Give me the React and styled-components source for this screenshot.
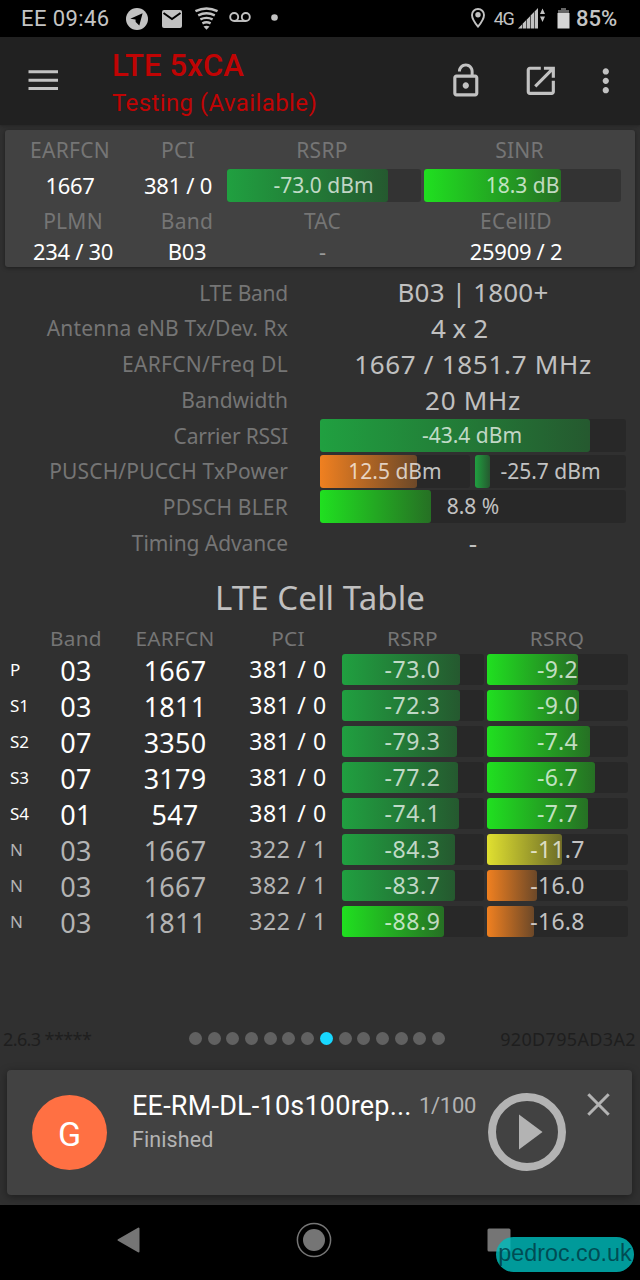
import React from "react";
import styled, { createGlobalStyle } from "styled-components";

const GlobalStyle = createGlobalStyle`
  * { box-sizing: border-box; }
  html, body { margin: 0; background: #000; }
  svg { display: block; flex: none; }
`;

const UI = `Roboto, "Liberation Sans", sans-serif`;
const DATA = `"Noto Sans", "Open Sans", sans-serif`;

const Screen = styled.div`
  width: 640px;
  height: 1280px;
  display: flex;
  flex-direction: column;
  overflow: hidden;
  background: #303030;
  color: #c0c0c0;
  font-family: ${DATA};
`;

/* ---------- status bar ---------- */

const StatusBar = styled.div`
  flex: none;
  height: 37px;
  padding: 0 23px 0 21px;
  display: flex;
  align-items: center;
  justify-content: space-between;
  background: #000;
  color: #c4c4c4;
  font-family: ${UI};
`;

const StatusGroup = styled.div`
  display: flex;
  align-items: center;
  height: 37px;
`;

const StatusText = styled.span`
  font-size: ${(p) => p.$size || 22}px;
  font-weight: ${(p) => p.$weight || 400};
  line-height: 37px;
  letter-spacing: ${(p) => p.$track || 0}px;
  margin-left: ${(p) => p.$gap || 0}px;
  white-space: pre;
`;

const StatusIcon = styled.svg`
  margin-left: ${(p) => p.$gap || 0}px;
`;

/* ---------- app bar ---------- */

const AppBar = styled.header`
  flex: none;
  height: 88px;
  padding: 0 15px 0 28px;
  display: flex;
  align-items: flex-start;
  background: #212121;
  box-shadow: 0 1px 3px rgba(0, 0, 0, 0.25);
  font-family: ${UI};
`;

const Titles = styled.div`
  flex: 1;
  margin-left: 53px;
  padding-top: 8px;
  color: #c00404;
  white-space: nowrap;
`;

const Title = styled.h1`
  margin: 0;
  font-size: 31px;
  font-weight: 500;
  line-height: 41px;
  letter-spacing: 0.1px;
`;

const Subtitle = styled.div`
  font-size: 24px;
  line-height: 34px;
  letter-spacing: 0.4px;
`;

const BarIcon = styled.svg`
  margin-top: ${(p) => p.$top}px;
  margin-left: ${(p) => p.$gap || 0}px;
`;

/* ---------- shared ---------- */

const TONES = {
  green: ["#20a040", "#25592f"],
  bright: ["#20e020", "#267024"],
  yellow: ["#e0e030", "#6c6c28"],
  orange: ["#f08020", "#6c4828"],
};

const Track = styled.div`
  position: relative;
  display: flex;
  align-items: center;
  justify-content: center;
  height: ${(p) => p.$height}px;
  padding-right: ${(p) => p.$shift || 0}px;
  border-radius: 3px;
  background: ${(p) => (p.$raised ? "#333333" : "#282828")};
  color: #c6c6c6;
  font-size: ${(p) => p.$size}px;
  letter-spacing: ${(p) => p.$tracking || 0}px;
  line-height: 1;
  white-space: nowrap;
`;

const Fill = styled.div`
  position: absolute;
  inset: 0 auto 0 0;
  border-radius: 3px;
  background: linear-gradient(
    to right,
    ${(p) => TONES[p.$tone][0]},
    ${(p) => TONES[p.$tone][1]}
  );
`;

const FillText = styled.span`
  position: relative;
  color: rgba(255, 255, 255, 0.73);
`;

function Meter({ tone, fill, text, height, size, raised, shift, tracking }) {
  return (
    <Track $height={height} $size={size} $raised={raised} $shift={shift} $tracking={tracking}>
      <Fill $tone={tone} style={{ width: fill }} />
      <FillText>{text}</FillText>
    </Track>
  );
}

/* ---------- summary card ---------- */

const Card = styled.section`
  flex: none;
  height: 137px;
  margin: 5px 5px 0;
  border-radius: 3px;
  background: #424242;
  box-shadow: 0 1px 4px rgba(0, 0, 0, 0.4);
  font-size: 21px;
`;

const CardRow = styled.div`
  display: grid;
  grid-template-columns: ${(p) => p.$cols};
  height: ${(p) => p.$height}px;
  align-items: center;
  text-align: center;
  line-height: 1;
  white-space: nowrap;
`;

const Label = styled.span`
  color: #757575;
  letter-spacing: 0.25px;
  padding-top: ${(p) => p.$drop || 0}px;
  padding-right: ${(p) => p.$shift || 0}px;
`;

const Value = styled.span`
  color: ${(p) => (p.$dim ? "#9a9a9a" : "#fff")};
  font-size: 22px;
  letter-spacing: -0.3px;
`;

const TOP_COLS = "130px 86px 206px 197px";
const BAR_COLS = "130px 86px 6px 194px 3px 197px";
const BOTTOM_COLS = "136px 92px 179px 208px";

/* ---------- details ---------- */

const Details = styled.section`
  flex: none;
  padding: 7.4px 14px 0 0;
`;

const DetailRow = styled.div`
  display: grid;
  grid-template-columns: 288px 306px;
  column-gap: 32px;
  height: 35.75px;
  align-items: center;
  line-height: 1;
  white-space: nowrap;
`;

const DetailLabel = styled.span`
  padding-top: 1.5px;
  text-align: right;
  color: #757575;
  font-size: 21px;
  letter-spacing: ${(p) => p.$track || 0}px;
`;

const DetailValue = styled.span`
  text-align: center;
  font-size: ${(p) => p.$size || 26}px;
  letter-spacing: ${(p) => p.$track || 0}px;
  padding-right: ${(p) => p.$shift || 0}px;
`;

const Split = styled.div`
  display: grid;
  grid-template-columns: 150px 151px;
  gap: 5px;
`;

/* ---------- cell table ---------- */

const TableTitle = styled.h2`
  flex: none;
  margin: 18px 0 0;
  height: 44px;
  font-size: 33px;
  font-weight: 400;
  line-height: 39px;
  letter-spacing: 0.1px;
  text-align: center;
`;

const Grid = styled.div`
  display: grid;
  grid-template-columns: 30px 72px 126px 100px 142px 141px;
  column-gap: 0;
  padding-left: 10px;
  align-items: center;
  text-align: center;
  line-height: 1;
  white-space: nowrap;
`;

const TableHead = styled(Grid)`
  flex: none;
  height: 31.6px;
  font-size: 20.8px;
  & > :nth-child(5) { margin-left: 7px; }
  & > :nth-child(6) { margin-left: 13px; }
`;

const TableBody = styled.div`
  flex: none;
  display: flex;
  flex-direction: column;
  gap: 4.7px;
  & > div > :nth-child(5) { margin: 0 -4px 0 4px; }
  & > div > :nth-child(6) { margin: 0 -7px 0 7px; }
`;

const CellRow = styled(Grid)`
  height: 31.3px;
  color: ${(p) => (p.$dim ? "#b4b4b4" : "#fff")};
`;

const Kind = styled.span`
  text-align: left;
  font-size: 17px;
`;

const Big = styled.span`
  padding-top: 1.5px;
  font-size: 27px;
  letter-spacing: 0.2px;
`;

const Pci = styled.span`
  font-size: 23px;
  letter-spacing: 0.6px;
`;

const CELLS = [
  ["P", "03", "1667", "381 / 0", "green", "-73.0", 117.5, "bright", "-9.2", 91],
  ["S1", "03", "1811", "381 / 0", "green", "-72.3", 117.5, "bright", "-9.0", 92],
  ["S2", "07", "3350", "381 / 0", "green", "-79.3", 115, "bright", "-7.4", 102.5],
  ["S3", "07", "3179", "381 / 0", "green", "-77.2", 116, "bright", "-6.7", 108],
  ["S4", "01", "547", "381 / 0", "green", "-74.1", 117, "bright", "-7.7", 101],
  ["N", "03", "1667", "322 / 1", "green", "-84.3", 113, "yellow", "-11.7", 75],
  ["N", "03", "1667", "382 / 1", "green", "-83.7", 113, "orange", "-16.0", 50],
  ["N", "03", "1811", "322 / 1", "bright", "-88.9", 102, "orange", "-16.8", 46.5],
];

/* ---------- footer ---------- */

const Pager = styled.div`
  flex: none;
  margin-top: auto;
  height: 32px;
  padding: 0 4px 0 3px;
  display: grid;
  grid-template-columns: 186px 256px 1fr;
  align-items: center;
  color: #1e1e1e;
  font-size: 18px;
  line-height: 32px;
  white-space: nowrap;
`;

const Build = styled.span`
  letter-spacing: ${(p) => p.$track || 0}px;
  text-align: ${(p) => p.$align || "left"};
`;

const Dots = styled.div`
  display: flex;
  justify-content: space-between;
`;

const Dot = styled.i`
  width: 13px;
  height: 13px;
  border-radius: 50%;
  background: ${(p) => (p.$active ? "#18d8ff" : "#616161")};
`;

const Toast = styled.section`
  flex: none;
  height: 124.5px;
  margin: 15.5px 8px 10.5px 7px;
  display: flex;
  border-radius: 4px;
  background: #424242;
  box-shadow: 0 2px 8px rgba(0, 0, 0, 0.4);
  font-family: ${UI};
`;

const Avatar = styled.div`
  flex: none;
  width: 75px;
  height: 75px;
  margin: 24.5px 0 0 25px;
  border-radius: 50%;
  background: #ff7043;
  color: #fff;
  font-size: 34px;
  line-height: 78px;
  text-align: center;
`;

const ToastText = styled.div`
  flex: none;
  width: 287px;
  margin: 17px 0 0 25px;
  white-space: nowrap;
`;

const ToastTitle = styled.div`
  color: #fff;
  font-size: 27px;
  line-height: 38px;
  letter-spacing: 0.22px;
`;

const ToastState = styled.div`
  color: #b3b3b3;
  font-size: 21.5px;
  line-height: 29px;
  letter-spacing: 0.1px;
`;

const Counter = styled.div`
  flex: none;
  width: 68.5px;
  margin-top: 17px;
  color: #b3b3b3;
  font-size: 22px;
  line-height: 37px;
  letter-spacing: -0.3px;
`;

const ToastIcon = styled.svg`
  margin-top: ${(p) => p.$top}px;
  margin-left: ${(p) => p.$gap || 0}px;
`;

const NavBar = styled.nav`
  position: relative;
  flex: none;
  height: 75px;
  padding: 0 129px 5px 117px;
  display: flex;
  align-items: center;
  justify-content: space-between;
  background: #000;
`;

const Watermark = styled.div`
  position: absolute;
  right: 6px;
  bottom: 8px;
  width: 138px;
  height: 35px;
  border-radius: 18px;
  background: rgba(0, 188, 188, 0.82);
  color: rgba(0, 50, 60, 0.75);
  font-family: "Liberation Sans", Arial, sans-serif;
  font-size: 23.3px;
  line-height: 32px;
  text-align: center;
  white-space: nowrap;
`;

const ink = "#c2c2c2";

export default function App() {
  return (
    <>
      <GlobalStyle />
      <Screen>
        <StatusBar>
          <StatusGroup>
            <StatusText $track={0.4}>EE 09:46</StatusText>
            <StatusIcon $gap={17} width="22" height="22" viewBox="0 0 22 22">
              <circle cx="11" cy="11" r="11" fill={ink} />
              <path d="M4.3 10.8 16.6 5.3 13.3 17.4 9.7 14.1 9.5 11.5z" fill="#000" />
            </StatusIcon>
            <StatusIcon $gap={13.5} width="20" height="18" viewBox="0 0 20 18">
              <rect width="20" height="18" rx="2" fill={ink} />
              <path d="M1.5 3 10 9 18.5 3" fill="none" stroke="#000" strokeWidth="2" />
            </StatusIcon>
            <StatusIcon $gap={13} width="23" height="23" viewBox="0 0 23 23">
              <g fill="none" stroke={ink} strokeWidth="2.4">
                <path d="M0.5 4.2Q11.5-1.2 22.5 4.2" />
                <path d="M3.2 8.4Q11.5 4.2 19.8 8.4" />
                <path d="M5.4 12.4Q11.5 9.4 17.6 12.4" />
                <path d="M7.4 16.4Q11.5 14.2 15.6 16.4" />
              </g>
              <path d="M8.5 19.6Q11.5 18 14.500 19.6L11.5 22.8z" fill={ink} />
            </StatusIcon>
            <StatusIcon $gap={11} width="22" height="13" viewBox="0 0 22 13">
              <g fill="none" stroke={ink} strokeWidth="1.9">
                <circle cx="5.2" cy="5" r="4" />
                <circle cx="16.8" cy="5" r="4" />
                <path d="M5.2 9H16.8" />
              </g>
            </StatusIcon>
            <StatusIcon $gap={20} width="7" height="9" viewBox="0 0 7 9">
              <circle cx="3.5" cy="3.5" r="3.3" fill={ink} />
            </StatusIcon>
          </StatusGroup>
          <StatusGroup>
            <StatusIcon width="14" height="22" viewBox="0 0 14 22">
              <path d="M7 1C3.6 1 1 3.6 1 6.9 1 11.2 7 18.6 7 18.6S13 11.2 13 6.9C13 3.6 10.4 1 7 1z" fill="none" stroke={ink} strokeWidth="1.9" />
              <circle cx="7" cy="6.8" r="2.7" fill={ink} />
            </StatusIcon>
            <StatusText $gap={9} $size={18} $track={-1.3}>4G</StatusText>
            <StatusIcon $gap={4} width="28" height="22" viewBox="0 0 28 22">
              <g fill={ink}>
                <path d="M0 20.5 4 16.5V20.5zM4.600 15.8 8 12.3V20.5H4.600zM8.600 11.8 12 8.2V20.500H8.600zM12.600 7.600 16 4.1V20.500H12.600zM16.600 3.500 20 0V20.500H16.600z" />
                <path d="M24.5 0.5 27 6H22zM24.5 14 27 8.5H22z" />
              </g>
            </StatusIcon>
            <StatusIcon $gap={11} width="13" height="22" viewBox="0 0 13 22">
              <path d="M4 0h5v2h3v3H1V2h3z" fill="#666" />
              <path d="M0.5 5H12.5V20.5H0.5z" fill="#d6d6d6" />
            </StatusIcon>
            <StatusText $gap={6.5} $weight={500} $track={-0.1}>85%</StatusText>
          </StatusGroup>
        </StatusBar>

        <AppBar>
          <BarIcon $top={33} width="31" height="20" viewBox="0 0 31 20">
            <path d="M0.5 1.8H30M0.5 10.2H30M0.5 18.4H30" stroke={ink} strokeWidth="3" />
          </BarIcon>
          <Titles>
            <Title>LTE 5xCA</Title>
            <Subtitle>Testing (Available)</Subtitle>
          </Titles>
          <BarIcon $top={24.5} width="37.6" height="37.6" viewBox="0 0 24 24">
            <path fill={ink} d="M12 17c1.1 0 2-.9 2-2s-.9-2-2-2-2 .9-2 2 .9 2 2 2zm6-9h-1V6c0-2.76-2.24-5-5-5S7 3.24 7 6h1.9c0-1.71 1.39-3.1 3.1-3.1 1.71 0 3.1 1.39 3.1 3.1v2H6c-1.1 0-2 .9-2 2v10c0 1.1.9 2 2 2h12c1.1 0 2-.9 2-2V10c0-1.1-.9-2-2-2zm0 12H6V10h12v10z" />
          </BarIcon>
          <BarIcon $gap={37} $top={25} width="37.6" height="37.6" viewBox="0 0 24 24">
            <path fill={ink} d="M19 19H5V5h7V3H5c-1.11 0-2 .9-2 2v14c0 1.1.89 2 2 2h14c1.1 0 2-.9 2-2v-7h-2v7zM14 3v2h3.59l-9.83 9.83 1.41 1.41L19 6.41V10h2V3h-7z" />
          </BarIcon>
          <BarIcon $gap={28} $top={25} width="37.6" height="37.6" viewBox="0 0 24 24">
            <path fill={ink} d="M12 8c1.1 0 2-.9 2-2s-.9-2-2-2-2 .9-2 2 .9 2 2 2zm0 2c-1.1 0-2 .9-2 2s.9 2 2 2 2-.9 2-2-.9-2-2-2zm0 6c-1.1 0-2 .9-2 2s.9 2 2 2 2-.9 2-2-.9-2-2-2z" />
          </BarIcon>
        </AppBar>

        <Card>
          <CardRow $cols={TOP_COLS} $height={38.5}>
            <Label $drop={1.5}>EARFCN</Label>
            <Label $drop={1.5}>PCI</Label>
            <Label $drop={1.5} $shift={4}>RSRP</Label>
            <Label $drop={1.5} $shift={12}>SINR</Label>
          </CardRow>
          <CardRow $cols={BAR_COLS} $height={33.5}>
            <Value>1667</Value>
            <Value>381 / 0</Value>
            <span />
            <Meter raised tone="green" fill={161} text="-73.0 dBm" height={33} size={21} shift={1} />
            <span />
            <Meter raised tone="bright" fill={137} text="18.3 dB" height={33} size={21} />
          </CardRow>
          <CardRow $cols={BOTTOM_COLS} $height={38}>
            <Label $drop={1}>PLMN</Label>
            <Label $drop={1}>Band</Label>
            <Label $drop={1}>TAC</Label>
            <Label $drop={1}>ECellID</Label>
          </CardRow>
          <CardRow $cols={BOTTOM_COLS} $height={21}>
            <Value>234 / 30</Value>
            <Value>B03</Value>
            <Value $dim>-</Value>
            <Value>25909 / 2</Value>
          </CardRow>
        </Card>

        <Details>
          <DetailRow>
            <DetailLabel $track={-0.25}>LTE Band</DetailLabel>
            <DetailValue $track={0.2}>B03 | 1800+</DetailValue>
          </DetailRow>
          <DetailRow>
            <DetailLabel $track={0.15}>Antenna eNB Tx/Dev. Rx</DetailLabel>
            <DetailValue $shift={27}>4 x 2</DetailValue>
          </DetailRow>
          <DetailRow>
            <DetailLabel $track={0.3}>EARFCN/Freq DL</DetailLabel>
            <DetailValue $track={0.7}>1667 / 1851.7 MHz</DetailValue>
          </DetailRow>
          <DetailRow>
            <DetailLabel>Bandwidth</DetailLabel>
            <DetailValue $track={0.7}>20 MHz</DetailValue>
          </DetailRow>
          <DetailRow>
            <DetailLabel $track={-0.22}>Carrier RSSI</DetailLabel>
            <Meter tone="green" fill={270} text="-43.4 dBm" height={33} size={21} shift={2} />
          </DetailRow>
          <DetailRow>
            <DetailLabel $track={0.16}>PUSCH/PUCCH TxPower</DetailLabel>
            <Split>
              <Meter tone="orange" fill={97} text="12.5 dBm" height={33} size={21} />
              <Meter tone="green" fill={15} text="-25.7 dBm" height={33} size={21} />
            </Split>
          </DetailRow>
          <DetailRow>
            <DetailLabel $track={0.2}>PDSCH BLER</DetailLabel>
            <Meter tone="bright" fill={111} text="8.8 %" height={33} size={21} />
          </DetailRow>
          <DetailRow>
            <DetailLabel $track={-0.07}>Timing Advance</DetailLabel>
            <DetailValue>-</DetailValue>
          </DetailRow>
        </Details>

        <TableTitle>LTE Cell Table</TableTitle>
        <TableHead>
          <span />
          <Label>Band</Label>
          <Label>EARFCN</Label>
          <Label>PCI</Label>
          <Label>RSRP</Label>
          <Label>RSRQ</Label>
        </TableHead>
        <TableBody>
          {CELLS.map(([kind, band, earfcn, pci, t1, rsrp, w1, t2, rsrq, w2], i) => (
            <CellRow key={i} $dim={kind === "N"}>
              <Kind>{kind}</Kind>
              <Big>{band}</Big>
              <Big>{earfcn}</Big>
              <Pci>{pci}</Pci>
              <Meter tone={t1} fill={w1} text={rsrp} height={31.3} size={23} shift={1} tracking={0.6} />
              <Meter tone={t2} fill={w2} text={rsrq} height={31.3} size={23} tracking={0.3} />
            </CellRow>
          ))}
        </TableBody>

        <Pager>
          <Build $track={-0.6}>2.6.3 *****</Build>
          <Dots>
            {Array.from({ length: 14 }, (_, i) => (
              <Dot key={i} $active={i === 7} />
            ))}
          </Dots>
          <Build $align="right" $track={0.35}>920D795AD3A2</Build>
        </Pager>

        <Toast>
          <Avatar>G</Avatar>
          <ToastText>
            <ToastTitle>EE-RM-DL-10s100rep...</ToastTitle>
            <ToastState>Finished</ToastState>
          </ToastText>
          <Counter>1/100</Counter>
          <ToastIcon $top={22.5} width="78" height="78" viewBox="0 0 78 78">
            <circle cx="39" cy="39" r="35" fill="none" stroke="#b3b3b3" strokeWidth="8" />
            <path d="M31 21.5V56.5L54.5 39z" fill="#b3b3b3" />
          </ToastIcon>
          <ToastIcon $top={22.5} $gap={21} width="23" height="23" viewBox="0 0 23 23">
            <path d="M1.3 1.3 21.7 21.7M21.7 1.3 1.3 21.7" stroke="#b3b3b3" strokeWidth="3" />
          </ToastIcon>
        </Toast>

        <NavBar>
          <svg width="23" height="26" viewBox="0 0 23 26">
            <path d="M1.5 13 21.5 1.5V24.5z" fill="#757575" stroke="#757575" strokeWidth="2" strokeLinejoin="round" />
          </svg>
          <svg width="36" height="36" viewBox="0 0 36 36">
            <circle cx="18" cy="18" r="16.6" fill="none" stroke="#757575" strokeWidth="1.5" />
            <circle cx="18" cy="18" r="11" fill="#757575" />
          </svg>
          <svg width="24" height="24" viewBox="0 0 24 24">
            <rect x="0.5" y="0.5" width="23" height="23" rx="1.5" fill="#757575" />
          </svg>
          <Watermark>pedroc.co.uk</Watermark>
        </NavBar>
      </Screen>
    </>
  );
}
